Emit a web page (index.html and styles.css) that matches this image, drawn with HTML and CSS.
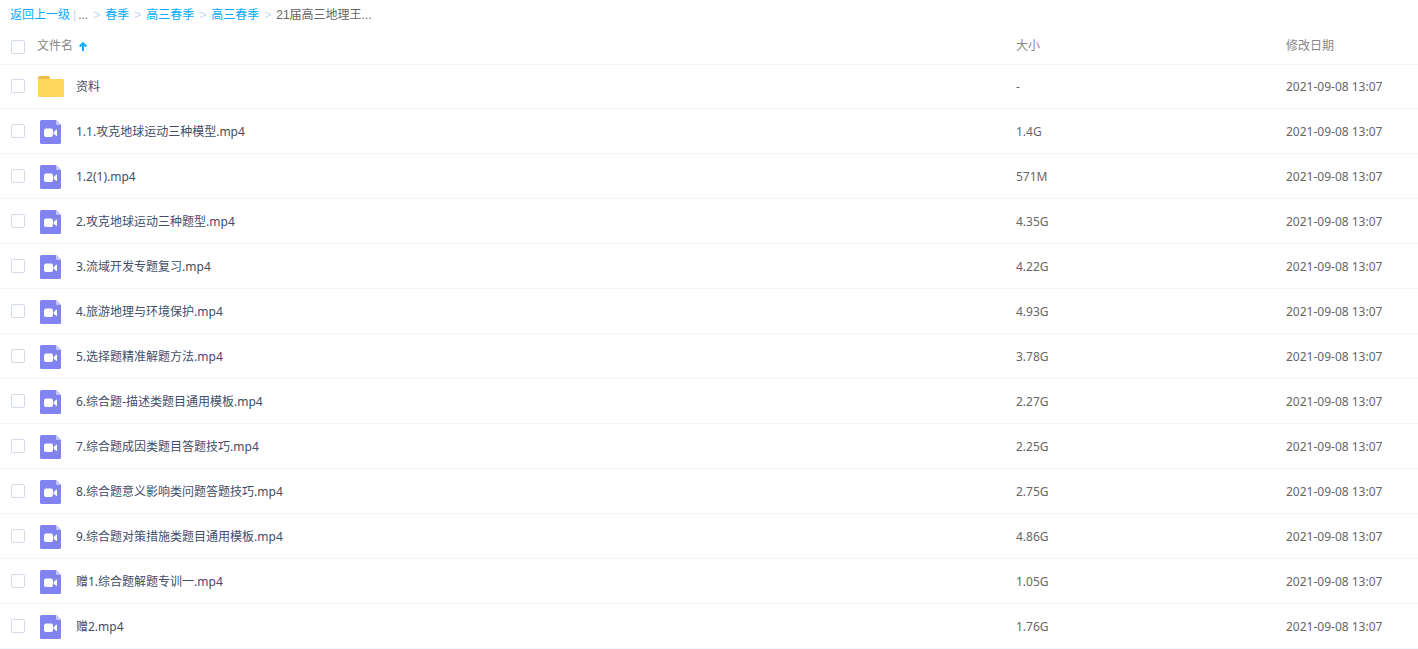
FILE: index.html
```html
<!DOCTYPE html>
<html lang="zh-CN">
<head>
    <meta charset="UTF-8">
    <meta name="viewport" content="width=device-width, initial-scale=1.0">
    <title>21届高三地理</title>
    <link rel="stylesheet" href="styles.css">
</head>
<body>

    <svg class="sprite" aria-hidden="true">
        <symbol id="icon-folder" viewBox="0 0 26 21">
            <path d="M0 5V1.5Q0 0 1.5 0H10.5Q12 0 12 1.5V5Z" fill="#edbd4a"/>
            <path d="M0 3H24.5Q26 3 26 4.500V19.500Q26 21 24.500 21H1.500Q0 21 0 19.500Z" fill="#ffd65c"/>
        </symbol>
        <symbol id="icon-video" viewBox="0 0 21 24">
            <path d="M1.500 0H16L21 5V22.500Q21 24 19.500 24H1.500Q0 24 0 22.500V1.500Q0 0 1.500 0Z" fill="#8183f1"/>
            <path d="M16 0L21 5H17.200Q16 5 16 3.800Z" fill="#c5c6fb"/>
            <rect x="4" y="8.500" width="9" height="8.500" rx="2" fill="#fff"/>
            <path d="M13.700 12.200L16 9.800Q17 9 17 10.300V15.300Q17 16.600 16 15.800L13.700 13.400Z" fill="#fff"/>
        </symbol>
    </svg>

    <nav class="crumbs">
        <a href="#">返回上一级</a><span class="bar">|</span><span>...</span><span class="gt">&gt;</span><a href="#">春季</a><span class="gt">&gt;</span><a href="#">高三春季</a><span class="gt">&gt;</span><a href="#">高三春季</a><span class="gt">&gt;</span><span>21届高三地理王...</span>
    </nav>

    <table class="files">
        <thead>
            <tr>
                <th class="check"><input type="checkbox" aria-label="全选"></th>
                <th class="name">
                    <button type="button" class="sort">文件名<svg class="arrow" viewBox="0 0 8 9"><path d="M4 9V1.500M0.700 4.500L4 1.200L7.300 4.500" fill="none" stroke="#09aaff" stroke-width="2"/></svg></button>
                </th>
                <th class="size">大小</th>
                <th class="date">修改日期</th>
            </tr>
        </thead>
        <tbody>
            <tr class="dir">
                <td class="check"><input type="checkbox" aria-label="资料"></td>
                <td class="name"><a href="#"><svg class="folder"><use href="#icon-folder"/></svg>资料</a></td>
                <td>-</td>
                <td>2021-09-08 13:07</td>
            </tr>
            <tr>
                <td class="check"><input type="checkbox" aria-label="1.1.攻克地球运动三种模型.mp4"></td>
                <td class="name"><a href="#"><svg class="video"><use href="#icon-video"/></svg>1.1.攻克地球运动三种模型.mp4</a></td>
                <td>1.4G</td>
                <td>2021-09-08 13:07</td>
            </tr>
            <tr>
                <td class="check"><input type="checkbox" aria-label="1.2(1).mp4"></td>
                <td class="name"><a href="#"><svg class="video"><use href="#icon-video"/></svg>1.2(1).mp4</a></td>
                <td>571M</td>
                <td>2021-09-08 13:07</td>
            </tr>
            <tr>
                <td class="check"><input type="checkbox" aria-label="2.攻克地球运动三种题型.mp4"></td>
                <td class="name"><a href="#"><svg class="video"><use href="#icon-video"/></svg>2.攻克地球运动三种题型.mp4</a></td>
                <td>4.35G</td>
                <td>2021-09-08 13:07</td>
            </tr>
            <tr>
                <td class="check"><input type="checkbox" aria-label="3.流域开发专题复习.mp4"></td>
                <td class="name"><a href="#"><svg class="video"><use href="#icon-video"/></svg>3.流域开发专题复习.mp4</a></td>
                <td>4.22G</td>
                <td>2021-09-08 13:07</td>
            </tr>
            <tr>
                <td class="check"><input type="checkbox" aria-label="4.旅游地理与环境保护.mp4"></td>
                <td class="name"><a href="#"><svg class="video"><use href="#icon-video"/></svg>4.旅游地理与环境保护.mp4</a></td>
                <td>4.93G</td>
                <td>2021-09-08 13:07</td>
            </tr>
            <tr>
                <td class="check"><input type="checkbox" aria-label="5.选择题精准解题方法.mp4"></td>
                <td class="name"><a href="#"><svg class="video"><use href="#icon-video"/></svg>5.选择题精准解题方法.mp4</a></td>
                <td>3.78G</td>
                <td>2021-09-08 13:07</td>
            </tr>
            <tr>
                <td class="check"><input type="checkbox" aria-label="6.综合题-描述类题目通用模板.mp4"></td>
                <td class="name"><a href="#"><svg class="video"><use href="#icon-video"/></svg>6.综合题-描述类题目通用模板.mp4</a></td>
                <td>2.27G</td>
                <td>2021-09-08 13:07</td>
            </tr>
            <tr>
                <td class="check"><input type="checkbox" aria-label="7.综合题成因类题目答题技巧.mp4"></td>
                <td class="name"><a href="#"><svg class="video"><use href="#icon-video"/></svg>7.综合题成因类题目答题技巧.mp4</a></td>
                <td>2.25G</td>
                <td>2021-09-08 13:07</td>
            </tr>
            <tr>
                <td class="check"><input type="checkbox" aria-label="8.综合题意义影响类问题答题技巧.mp4"></td>
                <td class="name"><a href="#"><svg class="video"><use href="#icon-video"/></svg>8.综合题意义影响类问题答题技巧.mp4</a></td>
                <td>2.75G</td>
                <td>2021-09-08 13:07</td>
            </tr>
            <tr>
                <td class="check"><input type="checkbox" aria-label="9.综合题对策措施类题目通用模板.mp4"></td>
                <td class="name"><a href="#"><svg class="video"><use href="#icon-video"/></svg>9.综合题对策措施类题目通用模板.mp4</a></td>
                <td>4.86G</td>
                <td>2021-09-08 13:07</td>
            </tr>
            <tr>
                <td class="check"><input type="checkbox" aria-label="赠1.综合题解题专训一.mp4"></td>
                <td class="name"><a href="#"><svg class="video"><use href="#icon-video"/></svg>赠1.综合题解题专训一.mp4</a></td>
                <td>1.05G</td>
                <td>2021-09-08 13:07</td>
            </tr>
            <tr>
                <td class="check"><input type="checkbox" aria-label="赠2.mp4"></td>
                <td class="name"><a href="#"><svg class="video"><use href="#icon-video"/></svg>赠2.mp4</a></td>
                <td>1.76G</td>
                <td>2021-09-08 13:07</td>
            </tr>
        </tbody>
    </table>

</body>
</html>
```
FILE: styles.css
```css
* {
    box-sizing: border-box;
}
body {
    margin: 0;
    background: #fff;
    color: #666;
    font: 12px/18px "Noto Sans", "Noto Sans CJK SC", sans-serif;
}
a {
    text-decoration: none;
}
.sprite {
    display: none;
}

.crumbs {
    display: flex;
    height: 29px;
    padding: 6px 10px 0;
    font-family: "Liberation Sans", "Noto Sans CJK SC", sans-serif;
    white-space: nowrap;
}
.crumbs a {
    color: #09aaff;
}
.crumbs .bar {
    margin: 0 2px 0 3px;
    color: #c4d8f1;
}
.crumbs .gt {
    margin: 0 5px;
    color: #c4d8f1;
}

.files {
    width: 100%;
    table-layout: fixed;
    border-collapse: separate;
    border-spacing: 0;
}
.files th,
.files td {
    height: 45px;
    padding: 2px 0 0;
    border-bottom: 1px solid #f2f6fd;
    text-align: left;
    vertical-align: middle;
}
.files th {
    height: 36px;
    padding: 0 0 1px;
    color: #888;
    font-weight: normal;
}
.files .dir td {
    height: 44px;
    padding-top: 0;
}
.files .check {
    width: 37px;
    padding: 0 0 0 11px;
}
.files .dir .check {
    padding-bottom: 1px;
}
.files .size {
    width: 270px;
}
.files .date {
    width: 132px;
}
.check input {
    -webkit-appearance: none;
    appearance: none;
    display: block;
    width: 14px;
    height: 14px;
    margin: 0;
    border: 1px solid #d3dce6;
    border-radius: 2px;
    background: #fff;
}
.check input:checked {
    background: #09aaff;
}
.sort {
    display: flex;
    align-items: center;
    padding: 0;
    border: 0;
    background: none;
    color: inherit;
    font: inherit;
    cursor: pointer;
}
.arrow {
    width: 8px;
    height: 9px;
    margin-left: 6px;
}
.name a {
    display: flex;
    align-items: center;
    color: #424e67;
}
.folder {
    width: 26px;
    height: 21px;
    margin: 0 12px 0 1px;
}
.video {
    width: 21px;
    height: 24px;
    margin: 0 15px 0 3px;
}
```
